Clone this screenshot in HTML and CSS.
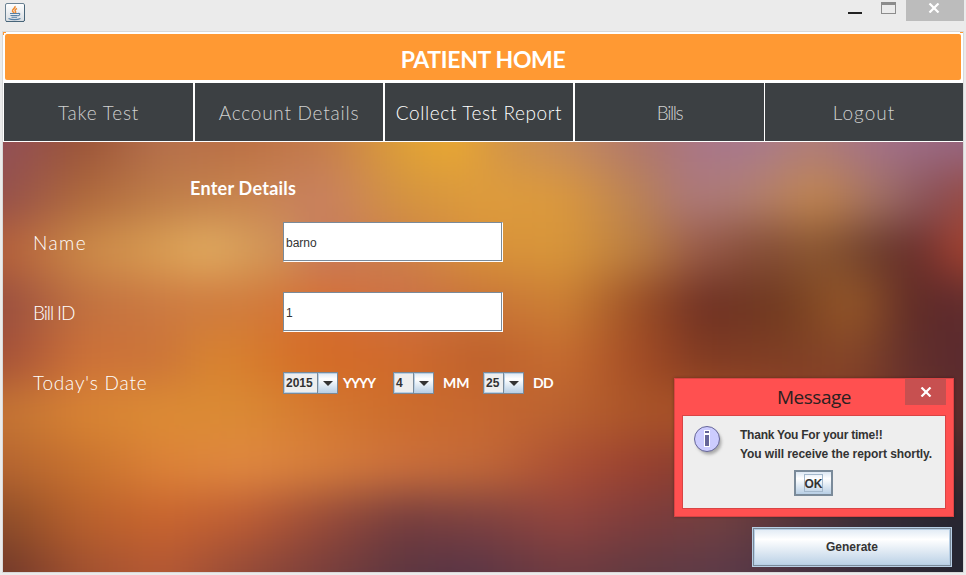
FILE: index.html
```
<!DOCTYPE html>
<html lang="en">
<head>
<meta charset="utf-8">
<title>Patient Home</title>
<link rel="stylesheet" href="styles.css">
</head>
<body>
<div class="window">
  <header class="titlebar">
    <svg class="app-icon" width="20" height="19" viewBox="0 0 20 19">
      <defs><linearGradient id="ig" x1="0" y1="0" x2="0" y2="1"><stop offset="0" stop-color="#fff"/><stop offset="1" stop-color="#d8dde2"/></linearGradient></defs>
      <rect x=".5" y=".5" width="19" height="18" rx="1.5" fill="url(#ig)" stroke="#6b8293"/>
      <path d="M1 18.5h18M19.5 2v16" stroke="#486579" fill="none"/>
      <path d="M10 3c1 2-3 3-2.500 5 .3 1 1 1.200 1.500 2M12 5.500c-2 1-2.500 2-1.500 3 .5.700 0 1.300-.5 1.700" stroke="#ee8b32" stroke-width="1.500" fill="none"/>
      <path d="M5 10.500h8M5.500 12.500h7M6.500 14.200h5.500M13 10.500c2.500-.7 2.500 2-.5 2.500M3.500 15.500c3 1.500 9 1.500 12 0" stroke="#5681a6" stroke-width="1.100" fill="none"/>
    </svg>
    <div class="controls">
      <i class="minimize"></i>
      <i class="maximize"></i>
      <span class="close"><svg width="12" height="10" viewBox="0 0 12 10"><path d="M1.500.5l9 9M10.500.5l-9 9" stroke="#fff" stroke-width="2.200"/></svg></span>
    </div>
  </header>
  <div class="client">
    <div class="banner"><h1>PATIENT HOME</h1></div>
    <nav class="menu">
      <a class="take">Take Test</a>
      <a class="account">Account Details</a>
      <a class="collect active">Collect Test Report</a>
      <a class="bills">Bills</a>
      <a class="logout">Logout</a>
    </nav>
    <main class="panel">
      <svg class="backdrop" width="960" height="430" viewBox="0 0 960 430" preserveAspectRatio="none">
        <defs>
          <filter id="soft" x="-80" y="-100" width="1120" height="630" filterUnits="userSpaceOnUse" color-interpolation-filters="sRGB"><feGaussianBlur stdDeviation="17 22"/></filter>
          <linearGradient id="r0" gradientUnits="userSpaceOnUse" x1="0" x2="960"><stop offset="0" stop-color="#925058"/><stop offset=".083" stop-color="#9a5438"/><stop offset=".167" stop-color="#b5704c"/><stop offset=".25" stop-color="#bb7045"/><stop offset=".333" stop-color="#c47c4c"/><stop offset=".417" stop-color="#dea038"/><stop offset=".47" stop-color="#eaa931"/><stop offset=".52" stop-color="#d29448"/><stop offset=".583" stop-color="#c68c5c"/><stop offset=".667" stop-color="#ae766e"/><stop offset=".74" stop-color="#a8768c"/><stop offset=".79" stop-color="#a87a8c"/><stop offset=".84" stop-color="#b07e78"/><stop offset=".917" stop-color="#a27088"/><stop offset="1" stop-color="#966680"/></linearGradient>
          <linearGradient id="r1" gradientUnits="userSpaceOnUse" x1="0" x2="960"><stop offset="0" stop-color="#94504c"/><stop offset=".083" stop-color="#ae683c"/><stop offset=".167" stop-color="#be7c48"/><stop offset=".25" stop-color="#c8844e"/><stop offset=".333" stop-color="#c88060"/><stop offset=".417" stop-color="#d49440"/><stop offset=".5" stop-color="#de9c3c"/><stop offset=".583" stop-color="#da983e"/><stop offset=".667" stop-color="#b88058"/><stop offset=".715" stop-color="#ac787a"/><stop offset=".77" stop-color="#b07e74"/><stop offset=".85" stop-color="#c2864e"/><stop offset=".917" stop-color="#a07068"/><stop offset=".97" stop-color="#885058"/><stop offset="1" stop-color="#984c44"/></linearGradient>
          <linearGradient id="r2" gradientUnits="userSpaceOnUse" x1="0" x2="960"><stop offset="0" stop-color="#b5603a"/><stop offset=".083" stop-color="#cc8a48"/><stop offset=".167" stop-color="#da9f54"/><stop offset=".21" stop-color="#e2ad60"/><stop offset=".28" stop-color="#d19658"/><stop offset=".333" stop-color="#c67a5c"/><stop offset=".417" stop-color="#cc8048"/><stop offset=".5" stop-color="#d8923a"/><stop offset=".583" stop-color="#d8963a"/><stop offset=".667" stop-color="#b87c42"/><stop offset=".725" stop-color="#985a48"/><stop offset=".79" stop-color="#844c36"/><stop offset=".85" stop-color="#8a5630"/><stop offset=".91" stop-color="#6c3c2c"/><stop offset=".95" stop-color="#682e2c"/><stop offset="1" stop-color="#a44230"/></linearGradient>
          <linearGradient id="r3" gradientUnits="userSpaceOnUse" x1="0" x2="960"><stop offset="0" stop-color="#984e40"/><stop offset=".083" stop-color="#c07040"/><stop offset=".167" stop-color="#cc7a42"/><stop offset=".25" stop-color="#d07c3e"/><stop offset=".333" stop-color="#d67034"/><stop offset=".417" stop-color="#cc7048"/><stop offset=".5" stop-color="#c87438"/><stop offset=".583" stop-color="#cc8034"/><stop offset=".667" stop-color="#984c26"/><stop offset=".73" stop-color="#6e3024"/><stop offset=".81" stop-color="#703a20"/><stop offset=".885" stop-color="#965828"/><stop offset=".95" stop-color="#5e2a26"/><stop offset="1" stop-color="#602c2e"/></linearGradient>
          <linearGradient id="r4" gradientUnits="userSpaceOnUse" x1="0" x2="960"><stop offset="0" stop-color="#a45038"/><stop offset=".083" stop-color="#cc7038"/><stop offset=".167" stop-color="#cc7438"/><stop offset=".22" stop-color="#d88430"/><stop offset=".333" stop-color="#d46a26"/><stop offset=".417" stop-color="#d06a2c"/><stop offset=".5" stop-color="#be602c"/><stop offset=".583" stop-color="#c66c30"/><stop offset=".667" stop-color="#a04a24"/><stop offset=".73" stop-color="#803a22"/><stop offset=".81" stop-color="#7e3e24"/><stop offset=".885" stop-color="#864628"/><stop offset=".95" stop-color="#602e2c"/><stop offset="1" stop-color="#5a2a2e"/></linearGradient>
          <linearGradient id="r5" gradientUnits="userSpaceOnUse" x1="0" x2="960"><stop offset="0" stop-color="#c47434"/><stop offset=".083" stop-color="#d88434"/><stop offset=".167" stop-color="#dc8c34"/><stop offset=".25" stop-color="#da8a34"/><stop offset=".333" stop-color="#d47830"/><stop offset=".417" stop-color="#cc6c2c"/><stop offset=".5" stop-color="#c66830"/><stop offset=".583" stop-color="#ba6230"/><stop offset=".667" stop-color="#aa5428"/><stop offset=".75" stop-color="#a85028"/><stop offset=".833" stop-color="#904028"/><stop offset="1" stop-color="#5c2c2c"/></linearGradient>
          <linearGradient id="r6" gradientUnits="userSpaceOnUse" x1="0" x2="960"><stop offset="0" stop-color="#b46430"/><stop offset=".083" stop-color="#c8722e"/><stop offset=".167" stop-color="#dc8238"/><stop offset=".25" stop-color="#e08840"/><stop offset=".333" stop-color="#d67e3c"/><stop offset=".417" stop-color="#cc703c"/><stop offset=".5" stop-color="#c26838"/><stop offset=".583" stop-color="#ac5034"/><stop offset=".667" stop-color="#984030"/><stop offset=".75" stop-color="#803c30"/><stop offset="1" stop-color="#3c282c"/></linearGradient>
          <linearGradient id="r7" gradientUnits="userSpaceOnUse" x1="0" x2="960"><stop offset="0" stop-color="#8c4c28"/><stop offset=".083" stop-color="#b8602c"/><stop offset=".167" stop-color="#c8642e"/><stop offset=".25" stop-color="#bc5c34"/><stop offset=".333" stop-color="#984a38"/><stop offset=".417" stop-color="#743c3e"/><stop offset=".5" stop-color="#7c4040"/><stop offset=".583" stop-color="#90443e"/><stop offset=".667" stop-color="#7c3c3c"/><stop offset=".75" stop-color="#704042"/><stop offset=".833" stop-color="#50343c"/><stop offset=".917" stop-color="#302c38"/><stop offset="1" stop-color="#242530"/></linearGradient>
          <linearGradient id="r8" gradientUnits="userSpaceOnUse" x1="0" x2="960"><stop offset="0" stop-color="#70382a"/><stop offset=".083" stop-color="#a05030"/><stop offset=".167" stop-color="#b45834"/><stop offset=".25" stop-color="#944a38"/><stop offset=".333" stop-color="#783e3c"/><stop offset=".417" stop-color="#5c3640"/><stop offset=".48" stop-color="#583546"/><stop offset=".583" stop-color="#6e3a40"/><stop offset=".667" stop-color="#603a42"/><stop offset=".75" stop-color="#5c3a48"/><stop offset=".833" stop-color="#483242"/><stop offset="1" stop-color="#242530"/></linearGradient>
        </defs>
        <g filter="url(#soft)">
          <rect x="-80" y="-100" width="1120" height="127" fill="url(#r0)"/><rect x="-80" y="27" width="1120" height="54" fill="url(#r1)"/><rect x="-80" y="81" width="1120" height="54" fill="url(#r2)"/>
          <rect x="-80" y="135" width="1120" height="54" fill="url(#r3)"/><rect x="-80" y="189" width="1120" height="54" fill="url(#r4)"/><rect x="-80" y="243" width="1120" height="54" fill="url(#r5)"/>
          <rect x="-80" y="297" width="1120" height="54" fill="url(#r6)"/><rect x="-80" y="351" width="1120" height="54" fill="url(#r7)"/><rect x="-80" y="405" width="1120" height="125" fill="url(#r8)"/>
        </g>
      </svg>
      <form class="form">
        <h2>Enter Details</h2>
        <div class="row"><label class="l-name">Name</label><div class="field">barno</div></div>
        <div class="row"><label class="l-bill">Bill ID</label><div class="field">1</div></div>
        <div class="row"><label class="l-date">Today's Date</label>
          <div class="date">
            <div class="part"><span class="combo year"><b>2015</b><i></i></span><span class="unit yyyy">YYYY</span></div>
            <div class="part"><span class="combo"><b>4</b><i></i></span><span class="unit mm">MM</span></div>
            <div class="part"><span class="combo"><b>25</b><i></i></span><span class="unit dd">DD</span></div>
          </div>
        </div>
        <div class="actions"><button type="button" class="generate">Generate</button></div>
      </form>
    </main>
  </div>
</div>
<section class="dialog">
  <div class="dialog-title"><span>Message</span></div>
  <div class="dialog-close"><svg width="12" height="10" viewBox="0 0 12 10"><path d="M1.500.5l9 9M10.500.5l-9 9" stroke="#fff" stroke-width="2.200"/></svg></div>
  <div class="dialog-body">
    <div class="message">
      <svg class="info" width="34" height="34" viewBox="0 0 34 34">
        <defs><filter id="sh" x="-30%" y="-30%" width="160%" height="160%"><feGaussianBlur stdDeviation="1.500"/></filter></defs>
        <circle cx="16" cy="16" r="12.500" fill="#999" opacity=".8" filter="url(#sh)"/>
        <circle cx="14" cy="13" r="12.500" fill="#ccccff" stroke="#666699"/>
        <path d="M11 4h6v4h-6zM11 8h6v13h-6z" fill="#fff"/>
        <path d="M12 5h4v2h-4zM12 9h4v11h-4z" fill="#666699"/>
      </svg>
      <p><span class="m1">Thank You For your time!!</span><br><span class="m2">You will receive the report shortly.</span></p>
    </div>
    <button type="button" class="ok"><span>OK</span></button>
  </div>
</section>
</body>
</html>
```
FILE: styles.css
```
* { box-sizing: border-box; }
body { margin: 0; width: 966px; height: 575px; overflow: hidden; background: #ebebeb; font-family: "Liberation Sans", Arial, sans-serif; color: #333; position: relative; }
.window { height: 575px; padding: 0 2px; }
.titlebar { height: 31px; display: flex; justify-content: space-between; align-items: flex-start; padding: 3px 0 0 3px; }
.controls { display: flex; align-items: flex-start; margin-top: -3px; }
.minimize { width: 14px; height: 2px; margin: 12px 19px 0 0; background: #222; }
.maximize { width: 15px; height: 12px; margin: 2px 10px 0 0; border: 1px solid #8c8c8c; border-top-width: 3px; }
.close { width: 58px; height: 21px; background: #bcbcbc; display: flex; justify-content: center; padding: 3px 2px 0 0; }
.client { height: 542px; border: 1px solid #d9d9d9; }
.banner { height: 51px; background: linear-gradient(#ff9933, #ff9933) 0 0 / 3px 1px no-repeat, linear-gradient(#ff9933, #ff9933) 0 0 / 1px 3px no-repeat, linear-gradient(#ff9933, #ff9933) 100% 0 / 3px 1px no-repeat, #fff; padding: 2px 2px 3px; }
.banner h1 { margin: 0; height: 46px; border-radius: 2px; background: #ff9933; color: #fff; display: flex; align-items: center; justify-content: center; font: 700 23px Lato, sans-serif; letter-spacing: -.35px; padding-top: 3px; }
.menu { height: 59px; background: #fff; display: grid; grid-template-columns: 189px 188px 188px 189px 1fr; column-gap: 2px; padding: 0 0 1px 1px; }
.menu a { background: #3c4043; color: #d0d0d0; font: 300 19px Lato, sans-serif; display: flex; align-items: center; justify-content: center; padding-top: 1px; white-space: nowrap; }
.menu a.active { color: #fff; }
.menu .logout { margin-left: -1px; letter-spacing: 1px; }
.take { letter-spacing: .8px; }
.account { letter-spacing: .75px; }
.collect { letter-spacing: .6px; }
.bills { letter-spacing: -1.4px; }
.panel { position: relative; height: 430px; overflow: hidden; }
.backdrop { position: absolute; inset: 0; }
.form { position: relative; color: #fff; height: 100%; padding: 35px 11px 0 30px; }
.form h2 { margin: 0 0 10px 157px; font: 700 18px/22px Lato, sans-serif; letter-spacing: .25px; height: 35px; }
.row { display: flex; align-items: center; height: 40px; margin-bottom: 30px; }
.row label { width: 250px; font: 300 19px Lato, sans-serif; white-space: nowrap; padding-top: 1px; }
.l-name { letter-spacing: 1.4px; }
.l-bill { letter-spacing: -1.1px; }
.l-date { letter-spacing: .8px; }
.field { width: 220px; height: 40px; background: #fff; border: 1px solid #7a8a99; border-right-color: #fff; border-bottom-color: #fff; box-shadow: inset -1px -1px #7a8a99; color: #333; font-size: 12px; line-height: 41px; padding-left: 2px; }
.date { display: flex; padding-top: 2px; }
.part { display: flex; align-items: center; width: 90px; }
.part:first-child { width: 110px; }
.combo { display: flex; width: 41px; height: 22px; border: 1px solid #7a8a99; background: #eee; color: #333; }
.combo.year { width: 55px; }
.combo b { flex: 1; font-size: 12px; line-height: 19px; padding-left: 1px; border: 1px solid #b8cfe5; border-right: 0; }
.combo i { width: 20px; border-left: 1px solid #7a8a99; box-shadow: inset 1px 1px #b8cfe5; background: linear-gradient(#dde8f3, #fff 30%, #b8cfe5); display: flex; justify-content: center; align-items: center; }
.combo i::after { content: ""; border: 5px solid transparent; border-top-color: #333; border-bottom: 0; }
.unit { font: 700 14px Lato, sans-serif; margin-left: 5px; padding-bottom: 2px; }
.yyyy { letter-spacing: -1.1px; }
.mm, .dd { margin-left: 9px; }
.dd { letter-spacing: -.6px; }
.actions { display: flex; justify-content: flex-end; margin-top: 125px; }
.row:has(.date) { margin-bottom: 0; }
button { font: 700 12px "Liberation Sans", Arial, sans-serif; color: #333; padding: 0; border-radius: 0; background: linear-gradient(#dde8f3, #fff 30%, #b8cfe5); }
.generate { width: 200px; height: 40px; border: 1px solid #b8cfe5; box-shadow: inset 0 0 0 1px #7a8a99, inset 0 0 0 2px #b8cfe5; }
.dialog { position: absolute; left: 674px; top: 378px; width: 280px; height: 139px; background: #ff5050; border: 1px solid #d94444; padding: 0 7px; box-shadow: 0 0 3px rgba(0,0,0,.3); }
.dialog-title { height: 36px; text-align: center; color: #2b2020; font: 19px/37px "Open Sans", sans-serif; letter-spacing: -.5px; }
.dialog-close { position: absolute; right: 7px; top: 0; width: 41px; height: 26px; background: #c75050; display: flex; align-items: center; justify-content: center; }
.dialog-body { height: 94px; background: #eee; border: 1px solid #d94444; padding: 10px 0 0 10px; }
.message { display: flex; height: 44px; }
.message p { margin: 0 0 0 13px; font: 700 12px/19px "Liberation Sans", Arial, sans-serif; white-space: nowrap; }
.m1 { letter-spacing: -.23px; }
.m2 { letter-spacing: -.06px; }
.ok { display: flex; align-items: center; justify-content: center; width: 39px; height: 26px; margin-left: 101px; border: 2px solid #7a8a99; }
.ok span { border: 1px solid #a3b8cc; width: 19px; height: 18px; line-height: 18px; display: flex; justify-content: center; }
```
